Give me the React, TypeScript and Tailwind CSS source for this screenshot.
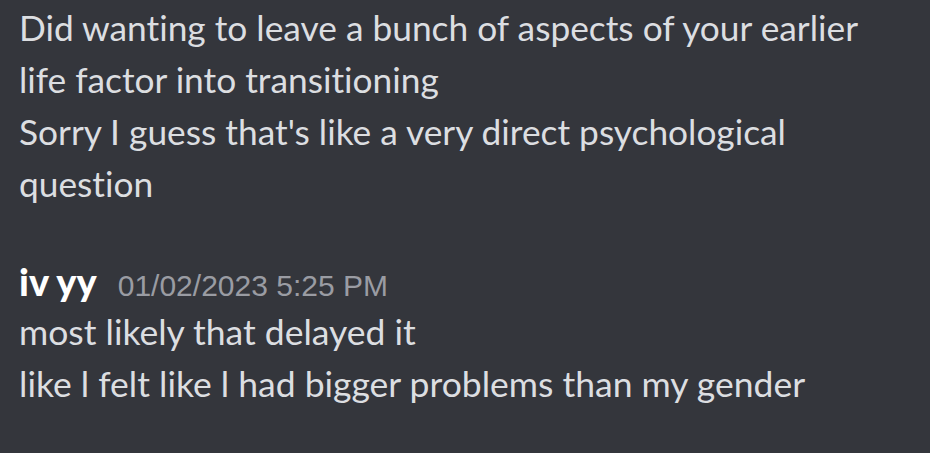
export default function App() {
  return (
    <div className="w-[930px] h-[453px] bg-[#34363c] overflow-hidden [font-variant-ligatures:none]" style={{ fontFamily: 'Lato, "Open Sans", sans-serif' }}>
      <div className="pl-[19px] pt-[2px] text-[35.3px] leading-[52px] text-[#dcdee1]">
        <div>Did wanting to leave a bunch of aspects of your earlier</div>
        <div>life factor into transitioning</div>
        <div>Sorry I guess that's like a very direct psychological</div>
        <div>question</div>
      </div>
      <div className="pl-[19px] mt-[46px]">
        <div className="flex items-baseline gap-[21px] leading-[50px] h-[50px]">
          <span className="text-[38px] font-black text-white">iv yy</span>
          <span className="text-[30px] text-[#9a9ca3]" style={{ fontFamily: '"Liberation Sans", Arial, sans-serif' }}>01/02/2023 5:25 PM</span>
        </div>
        <div className="text-[35.5px] leading-[52px] text-[#dcdee1]">
          <div>most likely that delayed it</div>
          <div>like l felt like l had bigger problems than my gender</div>
        </div>
      </div>
    </div>
  );
}
